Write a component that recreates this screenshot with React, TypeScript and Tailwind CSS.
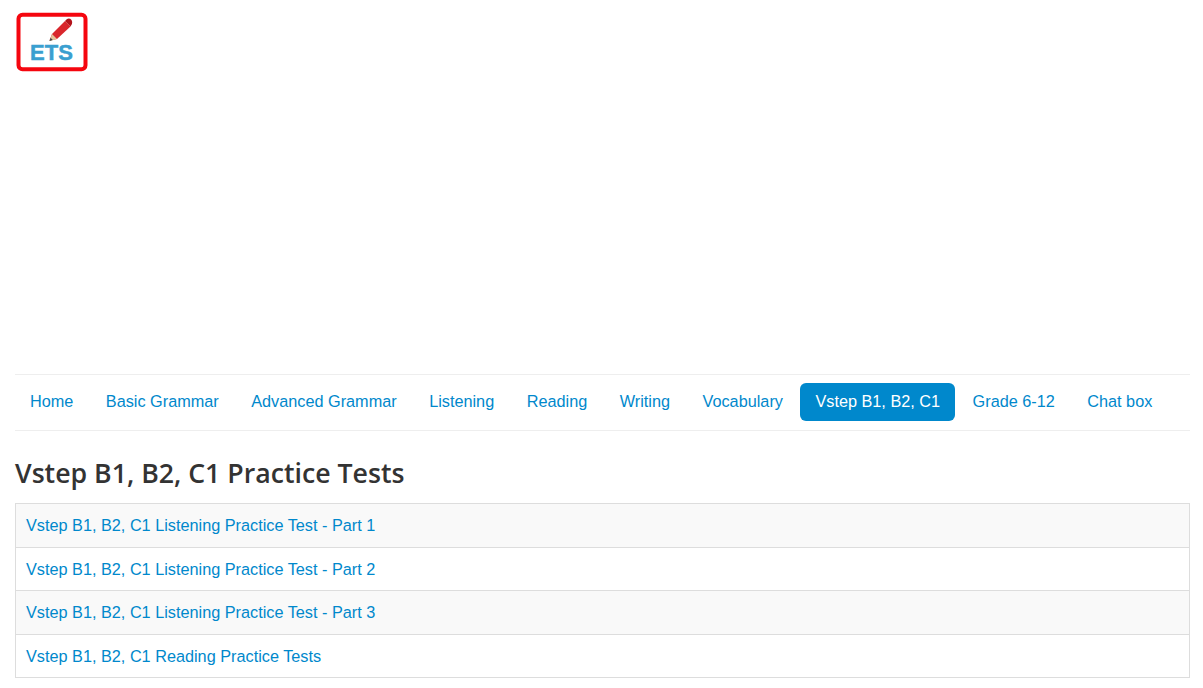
const navItems = [
  'Home',
  'Basic Grammar',
  'Advanced Grammar',
  'Listening',
  'Reading',
  'Writing',
  'Vocabulary',
  'Vstep B1, B2, C1',
  'Grade 6-12',
  'Chat box',
];

const tests = [
  'Vstep B1, B2, C1 Listening Practice Test - Part 1',
  'Vstep B1, B2, C1 Listening Practice Test - Part 2',
  'Vstep B1, B2, C1 Listening Practice Test - Part 3',
  'Vstep B1, B2, C1 Reading Practice Tests',
];

function Logo() {
  return (
    <svg width="74" height="60" viewBox="0 0 74 60" className="block">
      <rect x="3.5" y="2.7" width="67" height="54.5" rx="4" fill="#fff" stroke="#f5060f" strokeWidth="4" />
      {/* pencil */}
      <path d="M34.5 28.5 L37 22 L50 9 L55.5 14.5 L42 27 Z" fill="#d9262c" />
      <path d="M50 9 L52 7 Q54.5 5.8 56.5 8 L57.2 10 Q57.5 12 55.5 14.5 Z" fill="#b3141b" />
      <path d="M37 22 L42 27 L34.5 29 Z" fill="#e3c49a" />
      <path d="M34.5 29 L35.6 25.8 L37.8 28 Z" fill="#444" />
      <text
        x="36.5"
        y="48"
        textAnchor="middle"
        fill="#3a9fd0"
        stroke="#3a9fd0"
        strokeWidth="0.5"
        className="font-['Liberation_Sans',sans-serif] text-[22px] font-bold"
      >
        ETS
      </text>
    </svg>
  );
}

export default function App() {
  return (
    <div className="min-h-[688px] bg-white px-[15px] font-['Liberation_Sans',Arial,sans-serif] text-[16.25px] text-[#333]">
      <div className="h-[374px] pt-[12px]">
        <Logo />
      </div>

      <nav className="flex h-[57px] w-[1175px] items-start gap-[2.5px] border-y border-[#eeeeee] pt-[8px]">
        {navItems.map((item) => (
          <a
            key={item}
            href="#"
            className={
              item === 'Vstep B1, B2, C1'
                ? 'h-[38px] rounded-[6px] bg-[#0088cc] px-[15px] leading-[37px] text-white'
                : 'h-[38px] px-[15px] leading-[37px] text-[#0088cc]'
            }
          >
            {item}
          </a>
        ))}
      </nav>

      <h1 className="mt-[22px] h-[50px] font-['Open_Sans','Noto_Sans',sans-serif] text-[26.7px] leading-[40px] font-semibold text-[#333]">
        Vstep B1, B2, C1 Practice Tests
      </h1>

      <div className="w-[1175px] border-x border-b border-[#dddddd]">
        {tests.map((test, index) => (
          <div
            key={test}
            className={
              index % 2 === 0
                ? 'h-[43.6px] border-t border-[#dddddd] bg-[#f9f9f9] px-[10px] leading-[42.5px]'
                : 'h-[43.6px] border-t border-[#dddddd] bg-white px-[10px] leading-[42.5px]'
            }
          >
            <a href="#" className="text-[#0088cc]">
              {test}
            </a>
          </div>
        ))}
      </div>
    </div>
  );
}
